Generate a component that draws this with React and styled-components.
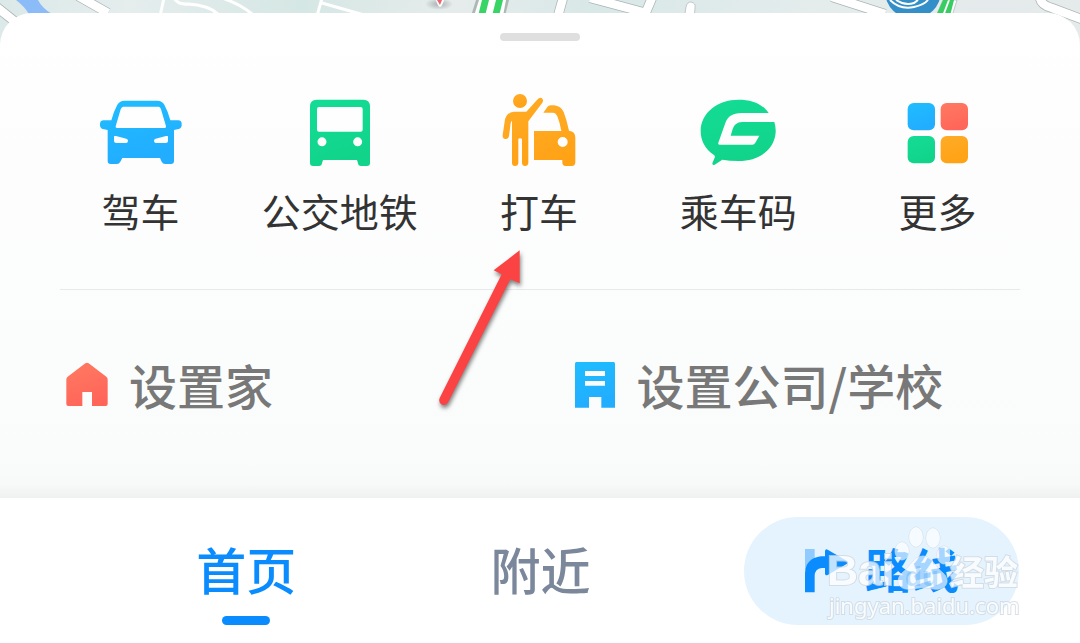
import React from "react";
import styled, { createGlobalStyle } from "styled-components";

const GlobalStyle = createGlobalStyle`
  * { box-sizing: border-box; }
  body {
    margin: 0;
    background: #fff;
    font-family: "Noto Sans CJK SC", sans-serif;
  }
  button { font-family: inherit; border: 0; background: none; padding: 0; cursor: pointer; }
`;

const Page = styled.div`
  position: relative;
  padding-top: 13px;
  overflow: hidden;
`;

const MapStrip = styled.svg`
  position: absolute;
  top: 0;
  left: 0;
  width: 100%;
  height: 60px;
`;

const Sheet = styled.main`
  position: relative;
  padding-top: 20px;
  border-radius: 32px 32px 0 0;
  background: linear-gradient(#fff 0, #fdfdfd 30%, #fafcfc 92%, #f8fafa 97%, #eff1f1 100%);
`;

const Handle = styled.div`
  width: 80px;
  height: 8px;
  margin: 0 auto 51px;
  border-radius: 4px;
  background: #dfdfdf;
`;

const Shortcuts = styled.div`
  display: grid;
  grid-template-columns: repeat(5, 1fr);
  padding: 0 43px 0 41px;
`;

const Shortcut = styled.button`
  position: relative;
  display: flex;
  flex-direction: column;
  align-items: center;
  gap: 18px;
  font-size: 39px;
  line-height: 48px;
  color: #333;
  white-space: nowrap;
`;

const ShortcutIcon = styled.svg`
  width: 84px;
  height: 76px;
`;

const Pointer = styled.svg`
  position: absolute;
  z-index: 1;
  top: 148px;
  left: -19px;
  width: 140px;
  height: 180px;
  pointer-events: none;
`;

const Divider = styled.hr`
  margin: 55px 60px 0;
  border: 0;
  height: 1px;
  background: #e6eaea;
`;

const Places = styled.div`
  display: grid;
  grid-template-columns: 1fr 1fr;
  padding: 63px 0 81px 65px;
`;

const Place = styled.button`
  display: flex;
  align-items: center;
  gap: 20px;
  font-size: 48px;
  font-weight: 500;
  line-height: 64px;
  color: #787878;
  white-space: nowrap;
`;

const PlaceLabel = styled.span`
  padding-bottom: 2px;
  line-height: 62px;
`;

const PlaceIcon = styled.svg`
  width: 44px;
  height: 48px;
`;

const NavBar = styled.nav`
  position: relative;
  display: grid;
  grid-template-columns: 32fr 32fr 36fr;
  padding: 19px 61px 18px 99px;
  background: #fff;
`;

const Tab = styled.button`
  display: flex;
  flex-direction: column;
  align-items: center;
  justify-content: flex-end;
  gap: 16px;
  font-size: 50px;
  font-weight: 500;
  line-height: 64px;
  color: ${(p) => (p.$active ? "#0a8cff" : "#7b879b")};

  &::after {
    content: "";
    width: 48px;
    height: 9px;
    border-radius: 5px;
    background: ${(p) => (p.$active ? "#0a8cff" : "transparent")};
  }
`;

const RouteCell = styled.div`
  position: relative;
  display: flex;
  justify-content: flex-end;
`;

const RouteButton = styled.button`
  display: flex;
  align-items: center;
  gap: 17px;
  width: 275px;
  height: 108px;
  padding-left: 60px;
  border-radius: 54px;
  background: #e5f3ff;
  font-size: 47px;
  font-weight: 700;
  color: #0a8cff;
`;

const RouteLabel = styled.span`
  padding-bottom: 6px;
  line-height: 64px;
`;

const RouteIcon = styled.svg`
  width: 44px;
  height: 48px;
`;

const Watermark = styled.div`
  position: absolute;
  right: -4px;
  top: 8px;
  display: flex;
  flex-direction: column;
  width: 196px;
  pointer-events: none;
  color: #fff;
  opacity: 0.75;
  paint-order: stroke fill;
  -webkit-text-stroke: 2px #cdd6dd;
`;

const Brand = styled.div`
  display: flex;
  align-items: flex-end;
  height: 68px;
  font-size: 34px;
  font-weight: 700;
  line-height: 44px;
`;

const Latin = styled.span`
  font-family: "Liberation Sans", sans-serif;
  font-size: 43px;
  line-height: 46px;
`;

const Paw = styled.svg`
  width: 56px;
  height: 68px;
`;

const Site = styled.div`
  font-family: "Noto Sans", sans-serif;
  font-size: 22px;
  line-height: 24px;
  padding-left: 2px;
`;

function CityMap() {
  return (
    <MapStrip viewBox="0 0 1080 60" preserveAspectRatio="xMidYMin slice" aria-hidden="true">
      <defs>
        <linearGradient id="land">
          <stop offset="0" stopColor="#dbe9e8" />
          <stop offset=".12" stopColor="#e5eded" />
          <stop offset=".28" stopColor="#d5e7e4" />
          <stop offset=".42" stopColor="#e6ecec" />
          <stop offset=".55" stopColor="#d8e8e7" />
          <stop offset=".75" stopColor="#e4ecec" />
          <stop offset="1" stopColor="#e5eaeb" />
        </linearGradient>
        <radialGradient id="pinShade">
          <stop offset="0" stopColor="#a9afb0" />
          <stop offset="1" stopColor="#a9afb0" stopOpacity="0" />
        </radialGradient>
      </defs>
      <rect width="1080" height="60" fill="url(#land)" />
      <path d="M16 0H38Q42 8 52 14H29Q24 6 16 0Z" fill="#8cbcf8" />
      <g fill="none" stroke="#abb4b4" strokeWidth="10">
        <path d="M-6 5L18 24M78 -4L108 13" />
        <path d="M563 -2L558 16M590 -2L650 14M652 -2L646 12M832 -3L885 14M1040 -2Q1041 5 1052 8L1084 20" />
      </g>
      <g fill="none" stroke="#fff" strokeWidth="8.500">
        <path d="M-6 5L18 24M78 -4L108 13" />
        <path d="M563 -2L558 16M590 -2L650 14M652 -2L646 12M832 -3L885 14M1040 -2Q1041 5 1052 8L1084 20" />
      </g>
      <path d="M684 20L686 7Q687 2 691 2Q696 3 695 8L694 20Z" fill="#fff" stroke="#abb4b4" strokeWidth=".7" />
      <g fill="none" stroke="#fff" strokeWidth="3">
        <path d="M164 -2L160 16M174 -2Q178 5 188 4Q208 5 218 14M222 -2Q240 4 252 14M322 -2L317 16M322 3L364 15" />
      </g>
      <ellipse cx="424" cy="4" rx="14" ry="6" fill="url(#pinShade)" transform="translate(15)" />
      <path d="M436 0Q438 7 440 7Q442 7 444 0Z" fill="#fff" />
      <path d="M437 0L440 5L442 0Z" fill="#ec6573" />
      <path d="M476 0H509L505 16H471Z" fill="#aeb6b6" />
      <path d="M479 0H506L503 16H474Z" fill="#fff" />
      <path d="M482 0H489L485 16H478ZM496 0H503L499 16H492Z" fill="#39d466" />
      <path d="M943 0H957L952 16H936Z" fill="#fff" stroke="#abb4b4" strokeWidth=".7" />
      <path d="M943 0H948L942 16H936ZM950 0H954L950 16H944Z" fill="#39cc62" />
      <circle cx="904" cy="-9" r="28" fill="#348fc8" transform="translate(9)" />
      <g fill="none" stroke="#fff" strokeWidth="2">
        <path d="M890 0Q900 10 914 7Q924 5 928 0M896 0Q905 6 914 3L918 0" />
      </g>
    </MapStrip>
  );
}

function Gradients() {
  const ramps = {
    blue: ["#1fbdff", "#22adff"],
    green: ["#14dc96", "#11d48a"],
    orange: ["#ffac27", "#ffa216"],
    coral: ["#ff7a62", "#ff6659"],
  };
  return (
    <svg width="0" height="0" style={{ position: "absolute" }} aria-hidden="true">
      <defs>
        {Object.entries(ramps).map(([id, [from, to]]) => (
          <linearGradient key={id} id={id} x1="0" y1="0" x2=".3" y2="1">
            <stop offset="0" stopColor={from} />
            <stop offset="1" stopColor={to} />
          </linearGradient>
        ))}
      </defs>
    </svg>
  );
}

const CarIcon = () => (
  <ShortcutIcon viewBox="57 36 252 228">
    <path
      fill="url(#blue)"
      fillRule="evenodd"
      d="M133 62H232Q246 62 253 74Q264 94 271 121H295Q305 122 305 131V137Q303 147 292 148L282 150V243Q282 252 273 252H256Q248 252 245 245L240 234H127L121 245Q118 252 110 252H92Q83 252 83 243V150L72 148Q62 147 60 137V131Q61 121 71 121H94Q101 94 112 74Q120 62 133 62ZM130 80Q125 81 122 88L107 139Q106 144 111 144H254Q259 144 258 139L243 88Q241 81 236 80ZM102 169V183Q102 189 109 189H139Q144 188 144 182Q144 177 139 176L108 168Q103 167 102 169ZM264 169V183Q264 189 257 189H227Q222 188 222 182Q222 177 227 176L258 168Q263 167 264 169Z"
    />
  </ShortcutIcon>
);

const BusIcon = () => (
  <ShortcutIcon viewBox="654 36 252 228">
    <path
      fill="url(#green)"
      fillRule="evenodd"
      d="M710 59H850Q870 59 870 80V249Q870 258 861 258H843Q835 258 834 250L831 240H729L726 250Q725 258 717 258H699Q690 258 690 249V80Q690 59 710 59ZM717 81Q711 81 711 87V149Q711 155 717 155H842Q848 155 848 149V87Q848 81 842 81ZM726 172A13.500 13.500 0 1 0 726 199A13.500 13.500 0 1 0 726 172ZM833 172A13.500 13.500 0 1 0 833 199A13.500 13.500 0 1 0 833 172Z"
    />
  </ShortcutIcon>
);

const TaxiIcon = () => (
  <ShortcutIcon viewBox="51 36 252 228">
    <g fill="url(#orange)">
      <circle cx="120" cy="63" r="21" />
      <path d="M102 95H139L173 58Q178 51 185 54Q192 60 187 68L145 124V249Q144 258 135 258Q127 258 126 249V178Q125 175 120 175Q115 175 115 178V249Q114 258 105 258Q96 258 96 249V122Q93 124 92 129L87 168Q85 178 76 177Q67 175 68 165L75 118Q81 97 102 95Z" />
      <path
        fillRule="evenodd"
        d="M190 98L202 81Q205 76 212 76H222Q243 78 251 96Q260 119 267 152Q286 154 286 173V246Q286 258 275 258H257Q247 257 247 248V240H162V153H244Q240 129 232 109Q228 99 219 98ZM248 171A15 15 0 1 0 248 201A15 15 0 1 0 248 171Z"
      />
    </g>
  </ShortcutIcon>
);

const CodeIcon = () => (
  <ShortcutIcon viewBox="648 36 252 228">
    <path
      fill="url(#green)"
      d="M775 59C816 59 848 72 866 99H784C758 100 744 108 736 129L715 188Q713 194 720 194H817Q823 194 826 188L838 167H752L758 147Q764 127 786 126H883Q888 142 887 157C884 209 836 243 776 243Q748 243 727 239L704 254Q697 257 697 250L704 233Q706 228 702 225C676 209 662 182 662 153C662 98 714 59 775 59Z"
    />
  </ShortcutIcon>
);

const MoreIcon = () => (
  <ShortcutIcon viewBox="105 36 252 228">
    <rect x="143" y="69" width="82" height="82" rx="18" fill="url(#blue)" />
    <rect x="242" y="69" width="82" height="82" rx="18" fill="url(#coral)" />
    <rect x="143" y="168" width="82" height="82" rx="18" fill="url(#green)" />
    <rect x="242" y="168" width="82" height="82" rx="18" fill="url(#orange)" />
  </ShortcutIcon>
);

const PointerArrow = () => (
  <Pointer viewBox="0 0 420 540" aria-hidden="true">
    <path
      d="M299 31L221 91L245 103L59 474Q54 488 66 494Q79 498 86 484L271 118L299 130Z"
      fill="#fc4343"
      style={{ filter: "drop-shadow(3px 9px 6px rgba(0,0,0,.5))" }}
    />
  </Pointer>
);

export default function App() {
  return (
    <Page>
      <GlobalStyle />
      <Gradients />
      <CityMap />
      <Sheet>
        <Handle />
        <Shortcuts>
          <Shortcut><CarIcon />驾车</Shortcut>
          <Shortcut><BusIcon />公交地铁</Shortcut>
          <Shortcut><TaxiIcon />打车<PointerArrow /></Shortcut>
          <Shortcut><CodeIcon />乘车码</Shortcut>
          <Shortcut><MoreIcon />更多</Shortcut>
        </Shortcuts>
        <Divider />
        <Places>
          <Place>
            <PlaceIcon viewBox="75 63 132 144">
              <path fill="url(#coral)" d="M136 70Q141 67 146 70L199 110Q203 113 203 118V192Q203 198 197 198H156V156H127V198H85Q79 198 79 192V118Q79 113 83 110Z" />
            </PlaceIcon>
            <PlaceLabel>设置家</PlaceLabel>
          </Place>
          <Place>
            <PlaceIcon viewBox="39 63 132 144">
              <path fill="url(#blue)" fillRule="evenodd" d="M49 66H161Q165 66 165 71V203H124V171H87V203H45V71Q45 66 49 66ZM75 93V108H135V93ZM75 123V137H135V123Z" />
            </PlaceIcon>
            <PlaceLabel>设置公司/学校</PlaceLabel>
          </Place>
        </Places>
      </Sheet>
      <NavBar>
        <Tab $active>首页</Tab>
        <Tab>附近</Tab>
        <RouteCell>
          <RouteButton>
            <RouteIcon viewBox="223 142 132 144">
              <path fill="#8fcbff" d="M226 148H255V181Q235 190 226 214Z" />
              <path fill="#0a8cff" d="M226 278V220Q228 176 274 170H286V154Q287 147 294 150L351 183Q358 188 351 193L294 226Q287 229 286 222V205H276Q256 207 255 228V278Z" />
            </RouteIcon>
            <RouteLabel>路线</RouteLabel>
          </RouteButton>
          <Watermark>
            <Brand>
              <Latin>Bai</Latin>
              <Paw viewBox="0 0 56 68">
                <g fill="#fff" fillOpacity=".85" stroke="#cdd6dd">
                  <ellipse cx="8" cy="26" rx="7" ry="9" />
                  <ellipse cx="22" cy="12" rx="7" ry="10" />
                  <ellipse cx="39" cy="13" rx="7" ry="10" />
                  <ellipse cx="50" cy="30" rx="7" ry="9" />
                  <path d="M29 31C38 31 41 42 49 48C58 56 51 66 40 64Q29 61 18 64C5 66 0 56 8 48C16 42 20 31 29 31Z" />
                </g>
                <text x="11" y="61" fontFamily="Liberation Sans" fontSize="28" fontWeight="700" fill="#b5d9f8" stroke="none" style={{ WebkitTextStroke: "0" }}>du</text>
              </Paw>
              经验
            </Brand>
            <Site>jingyan.baidu.com</Site>
          </Watermark>
        </RouteCell>
      </NavBar>
    </Page>
  );
}
